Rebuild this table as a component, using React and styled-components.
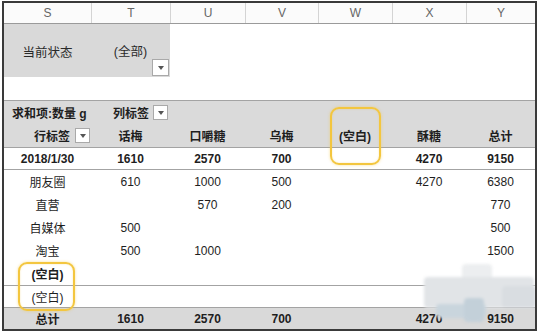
import React from "react";
import styled, { createGlobalStyle } from "styled-components";

const GlobalStyle = createGlobalStyle`
    body {
        margin: 0;
        background: #ffffff;
        font-family: "Liberation Sans", "Noto Sans CJK SC", sans-serif;
    }
`;

const COLS = "87px 79px 75px 73px 74px 74px 69px";
const LETTERS = ["S", "T", "U", "V", "W", "X", "Y"];
const FRUITS = ["话梅", "口嚼糖", "乌梅", "(空白)", "酥糖", "总计"];

const rows = [
    { label: "朋友圈", values: ["610", "1000", "500", "", "4270", "6380"] },
    { label: "直营", values: ["", "570", "200", "", "", "770"] },
    { label: "自媒体", values: ["500", "", "", "", "", "500"] },
    { label: "淘宝", values: ["500", "1000", "", "", "", "1500"] },
];

const Sheet = styled.div`
    position: relative;
    width: 531px;
    margin: 1px 0 0 2px;
    border: 2px solid #3a3a3a;
    color: #1e1e1e;
    font-size: 12px;
    overflow: hidden;
`;

const Row = styled.div`
    display: grid;
    grid-template-columns: ${COLS};
    height: ${({h}) => `${h || 23}px`};
    background: ${({bg}) => bg || "#ffffff"};
    font-weight: ${({bold}) => (bold ? 700 : 400)};
    border-top: ${({line}) => (line ? "1px solid #a3a3a3" : "none")};
    box-sizing: border-box;
`;

const Letter = styled.div`
    display: flex;
    align-items: center;
    justify-content: center;
    color: #666666;
    font-size: 12px;
    border-left: ${({first}) => (first ? "none" : "1px solid #d4d4d4")};
`;

const ColHeader = styled(Row)`
    border-bottom: 1px solid #9a9a9a;
    height: 21px;
    background: #fbfbfb;
`;

const Cell = styled.div`
    display: flex;
    align-items: center;
    justify-content: center;
    white-space: nowrap;
`;

const FilterCell = styled.div`
    display: grid;
    background: #d9d9d9;
    & > * {
        grid-area: 1 / 1;
    }
`;

const FilterText = styled.span`
    align-self: center;
    justify-self: center;
    font-size: 12.5px;
    color: #2a2a2a;
    margin-top: ${({up}) => `${up || 0}px`};
`;

const Drop = styled.span`
    display: inline-flex;
    align-items: center;
    justify-content: center;
    width: 15px;
    height: 15px;
    background: #ffffff;
    border: 1px solid #a9a9a9;
    box-sizing: border-box;
    &::after {
        content: "";
        border-left: 3.5px solid transparent;
        border-right: 3.5px solid transparent;
        border-top: 4px solid #555555;
        margin-top: 1px;
    }
`;

const CornerDrop = styled(Drop)`
    align-self: end;
    justify-self: end;
    margin: 0 1px 1px 0;
    width: 17px;
    height: 17px;
`;

const LabelCell = styled.div`
    display: flex;
    align-items: center;
    white-space: nowrap;
    gap: ${({gap}) => `${gap || 0}px`};
    justify-content: ${({end}) => (end ? "flex-end" : "flex-start")};
    padding: ${({pad}) => pad || "0"};
`;

const Highlight = styled.div`
    position: absolute;
    left: ${({x}) => `${x}px`};
    top: ${({y}) => `${y}px`};
    width: ${({w}) => `${w}px`};
    height: ${({hh}) => `${hh}px`};
    border: 2px solid #f3c63f;
    border-radius: 9px;
    box-sizing: border-box;
    box-shadow: 0 0 3px rgba(243, 198, 63, 0.55), inset 0 0 2px rgba(243, 198, 63, 0.4);
`;

// blurred watermark patch in the lower right corner
const Smudge = styled.div`
    position: absolute;
    left: 412px;
    top: 255px;
    width: 122px;
    height: 73px;
    filter: blur(1.5px);
`;

const Blot = styled.div`
    position: absolute;
    left: ${({x}) => `${x}px`};
    top: ${({y}) => `${y}px`};
    width: ${({w}) => `${w}px`};
    height: ${({hh}) => `${hh}px`};
    background: ${({c}) => c};
    border-radius: 4px;
`;

function DataRow({ label, values, bold, bg, line, h }) {
    return (
        <Row bold={bold} bg={bg} line={line} h={h}>
            <Cell>{label}</Cell>
            {values.map((v, i) => (
                <Cell key={i}>{v}</Cell>
            ))}
        </Row>
    );
}

export default function App() {
    return (
        <>
            <GlobalStyle />
            <Sheet>
                <ColHeader>
                    {LETTERS.map((l, i) => (
                        <Letter key={l} first={i === 0}>{l}</Letter>
                    ))}
                </ColHeader>

                <Row h={53}>
                    <FilterCell>
                        <FilterText up={1}>当前状态</FilterText>
                    </FilterCell>
                    <FilterCell>
                        <FilterText>(全部)</FilterText>
                        <CornerDrop />
                    </FilterCell>
                </Row>

                <Row h={23} />

                <Row bg="#dadada" bold line h={24}>
                    <LabelCell pad="0 0 0 8px">求和项:数量 g</LabelCell>
                    <LabelCell pad="0 0 0 22px" gap={4}>
                        列标签 <Drop />
                    </LabelCell>
                </Row>
                <Row bg="#dadada" bold h={23}>
                    <LabelCell end gap={5} pad="0 1px 0 0">
                        行标签 <Drop />
                    </LabelCell>
                    {FRUITS.map((f) => (
                        <Cell key={f}>{f}</Cell>
                    ))}
                </Row>

                <DataRow
                    line
                    bold
                    h={22}
                    label="2018/1/30"
                    values={["1610", "2570", "700", "", "4270", "9150"]}
                />

                <Row line h={1} />
                {rows.map((r) => (
                    <DataRow key={r.label} label={r.label} values={r.values} />
                ))}
                <DataRow bold label="(空白)" values={["", "", "", "", "", ""]} />
                <DataRow line h={22} label="(空白)" values={["", "", "", "", "", ""]} />

                <DataRow
                    line
                    bold
                    bg="#d9d9d9"
                    h={22}
                    label="总计"
                    values={["1610", "2570", "700", "", "4270", "9150"]}
                />

                <Highlight x={326} y={104} w={51} hh={58} />
                <Highlight x={14} y={259} w={57} hh={49} />

                <Smudge>
                    <Blot x={46} y={6} w={30} hh={20} c="#eceef0" />
                    <Blot x={8} y={19} w={110} hh={31} c="#e1e4e7" />
                    <Blot x={86} y={28} w={34} hh={22} c="#d9dde1" />
                    <Blot x={20} y={46} w={50} hh={14} c="#c9d5dd" />
                    <Blot x={48} y={40} w={20} hh={24} c="#c3d0d9" />
                </Smudge>
            </Sheet>
        </>
    );
}
